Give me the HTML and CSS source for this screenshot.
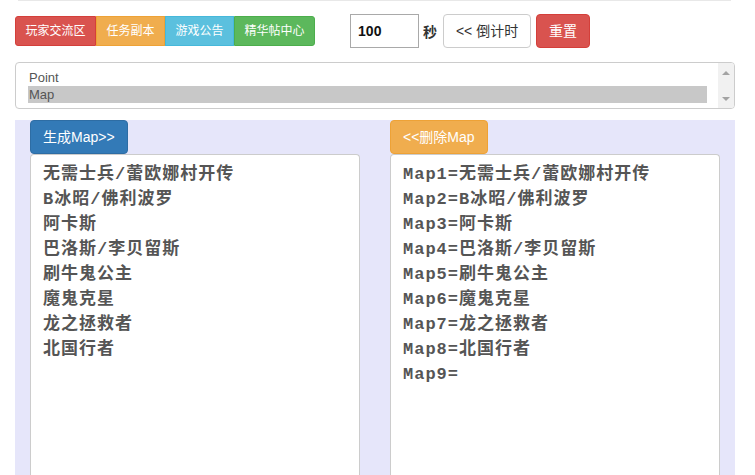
FILE: index.html
```html
<!DOCTYPE html>
<html lang="zh-CN">
<head>
<meta charset="utf-8">
<title>Map</title>
<link rel="stylesheet" href="styles.css">
</head>
<body>
<div class="topline"></div>
<div class="toolbar">
  <div class="btn-group">
    <span class="btn btn-sm red">玩家交流区</span>
    <span class="btn btn-sm orange">任务副本</span>
    <span class="btn btn-sm blue">游戏公告</span>
    <span class="btn btn-sm green">精华帖中心</span>
  </div>
  <div class="timer">
    <div class="num-input">100</div>
    <span class="sec">秒</span>
    <span class="btn btn-default">&lt;&lt; 倒计时</span>
    <span class="btn red reset">重置</span>
  </div>
</div>
<div class="listbox">
  <div class="options">
    <div class="option">Point</div>
    <div class="option selected">Map</div>
  </div>
  <div class="scrollbar">
    <span class="arrow up"></span>
    <span class="arrow down"></span>
  </div>
</div>
<div class="panel">
  <div class="col">
    <span class="btn primary">生成Map&gt;&gt;</span>
    <div class="area">
      <div class="line">无需士兵/蕾欧娜村开传</div>
      <div class="line">B冰昭/佛利波罗</div>
      <div class="line">阿卡斯</div>
      <div class="line">巴洛斯/李贝留斯</div>
      <div class="line">刷牛鬼公主</div>
      <div class="line">魔鬼克星</div>
      <div class="line">龙之拯救者</div>
      <div class="line">北国行者</div>
    </div>
  </div>
  <div class="col">
    <span class="btn orange">&lt;&lt;删除Map</span>
    <div class="area">
      <div class="line">Map1=无需士兵/蕾欧娜村开传</div>
      <div class="line">Map2=B冰昭/佛利波罗</div>
      <div class="line">Map3=阿卡斯</div>
      <div class="line">Map4=巴洛斯/李贝留斯</div>
      <div class="line">Map5=刷牛鬼公主</div>
      <div class="line">Map6=魔鬼克星</div>
      <div class="line">Map7=龙之拯救者</div>
      <div class="line">Map8=北国行者</div>
      <div class="line">Map9=</div>
    </div>
  </div>
</div>
</body>
</html>
```

FILE: styles.css
```css
html, body {
  margin: 0;
  padding: 0;
  background: #fff;
  font-family: "Liberation Sans", "Noto Sans CJK SC", sans-serif;
  color: #333;
  overflow: hidden;
}
.topline {
  margin: 0 24px 0 18px;
  height: 1px;
  background: #e8e8e8;
}
.toolbar {
  display: flex;
  align-items: center;
  padding: 12px 0 0 15px;
  height: 35px;
}
.btn-group {
  display: flex;
}
.btn {
  display: inline-flex;
  align-items: center;
  justify-content: center;
  box-sizing: border-box;
  height: 34px;
  padding: 0 12px;
  font-size: 14px;
  line-height: 20px;
  color: #fff;
  border: 1px solid transparent;
  border-radius: 4px;
  white-space: nowrap;
}
.btn-sm {
  height: 30px;
  padding: 0 9.5px;
  font-size: 12px;
  border-radius: 0;
}
.btn-group .btn:first-child { border-radius: 3px 0 0 3px; }
.btn-group .btn:last-child { border-radius: 0 3px 3px 0; }
.red { background: #d9534f; border-color: #d43f3a; }
.orange { background: #f0ad4e; border-color: #eea236; }
.blue { background: #5bc0de; border-color: #46b8da; }
.green { background: #5cb85c; border-color: #4cae4c; }
.primary { background: #337ab7; border-color: #2e6da4; }
.btn-default {
  background: #fff;
  color: #333;
  border-color: #ccc;
  margin-left: 6px;
  width: 88px;
}
.reset {
  margin-left: 5px;
  width: 54px;
}
.timer {
  display: flex;
  align-items: center;
  margin-left: 35px;
}
.num-input {
  box-sizing: border-box;
  width: 69px;
  height: 34px;
  border: 1px solid #a9a9a9;
  padding: 0 7px;
  font-size: 14px;
  font-weight: bold;
  line-height: 32px;
  color: #111;
}
.sec {
  margin-left: 4px;
  font-size: 14px;
  font-weight: bold;
  color: #333;
}
.listbox {
  box-sizing: border-box;
  margin: 14px 20px 0 15px;
  height: 47px;
  border: 1px solid #ccc;
  border-radius: 4px;
  display: flex;
  padding: 6px 0 5px 12px;
}
.options {
  flex: 1;
}
.option {
  height: 17px;
  line-height: 17px;
  font-size: 13px;
  color: #555;
  padding-left: 1px;
}
.option.selected {
  background: #c8c8c8;
}
.scrollbar {
  width: 16px;
  margin: -6px 0 -5px 11px;
  background: #f1f1f1;
  border-radius: 0 3px 3px 0;
  display: flex;
  flex-direction: column;
  justify-content: space-between;
  align-items: center;
  padding: 8px 0 7px;
}
.arrow {
  width: 0;
  height: 0;
  border-left: 4px solid transparent;
  border-right: 4px solid transparent;
}
.arrow.up { border-bottom: 4px solid #a3a3a3; }
.arrow.down { border-top: 4px solid #a3a3a3; }
.panel {
  margin: 11px 20px 0 15px;
  background: #e6e6fa;
  display: flex;
  height: 360px;
}
.col {
  flex: 1;
  padding: 0 15px;
  display: flex;
  flex-direction: column;
  align-items: flex-start;
}
.col .btn {
  border-radius: 4px;
}
.area {
  align-self: stretch;
  box-sizing: border-box;
  height: 321px;
  background: #fff;
  border: 1px solid #ccc;
  border-bottom: 0;
  border-radius: 4px 4px 0 0;
  padding: 7px 12px;
}
.line {
  height: 25px;
  line-height: 25px;
  font-family: "Liberation Mono", "Noto Sans CJK SC", monospace;
  font-size: 17px;
  font-weight: bold;
  letter-spacing: 1px;
  color: #555;
  white-space: nowrap;
}
```
